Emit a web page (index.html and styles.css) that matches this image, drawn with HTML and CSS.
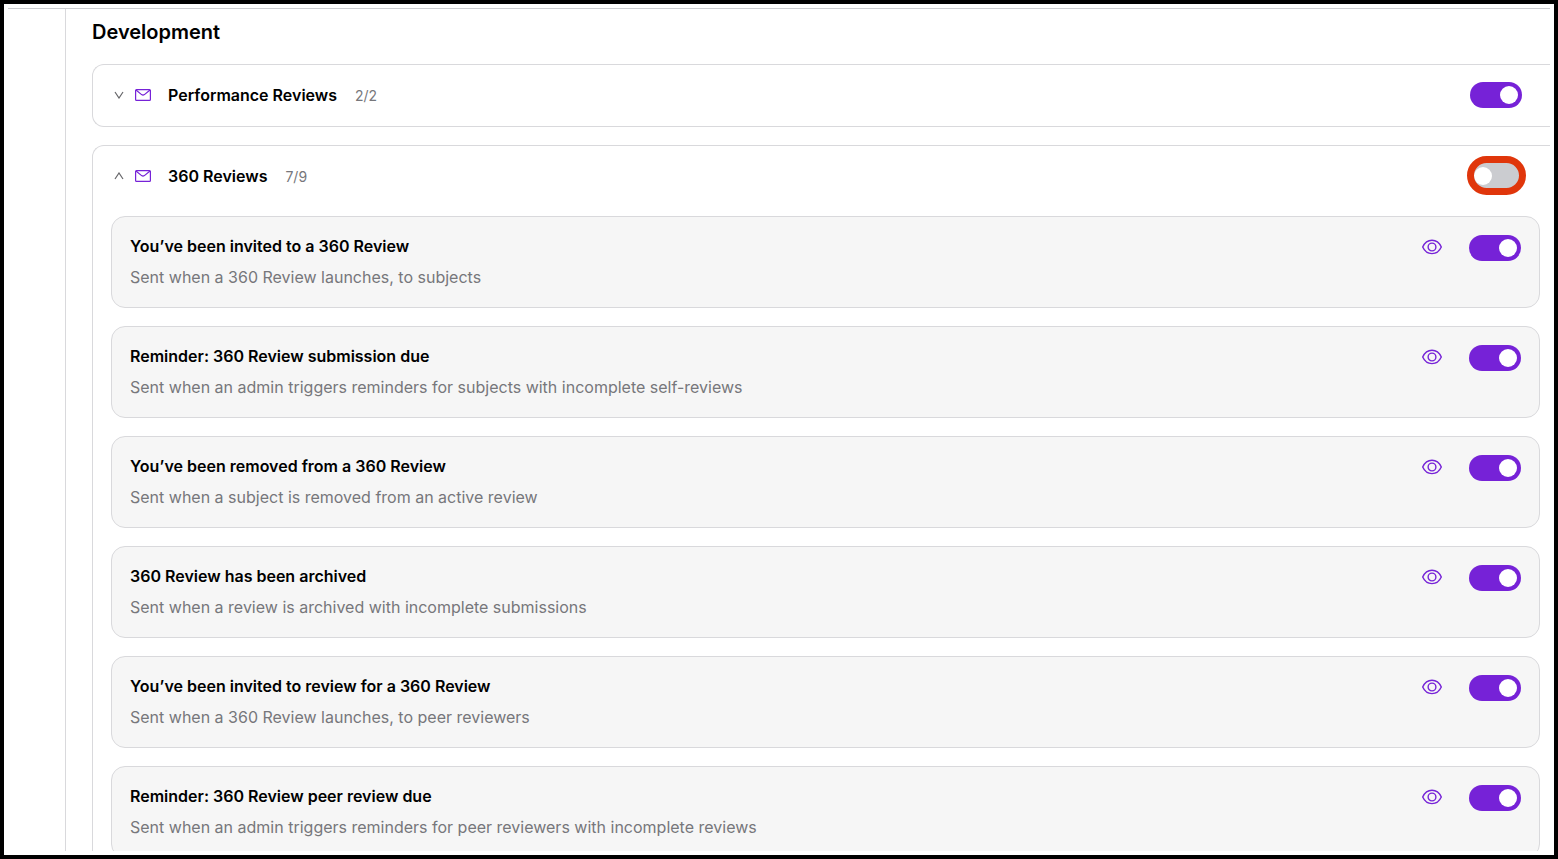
FILE: index.html
```html
<!DOCTYPE html>
<html lang="en">
<head>
	<meta charset="UTF-8">
	<meta name="viewport" content="width=device-width, initial-scale=1">

	<title>Notification settings</title>

	<link rel="stylesheet" href="styles.css">
</head>
<body>

	<!-- shared icons -->
	<svg class="sprite" aria-hidden="true">
		<symbol id="chevron-down" viewBox="0 0 10 8"><path d="M1 1l4 6 4-6"/></symbol>
		<symbol id="chevron-up" viewBox="0 0 10 8"><path d="M1 7l4-6 4 6"/></symbol>
		<symbol id="mail" viewBox="0 0 16 12"><rect x=".6" y=".6" width="14.8" height="10.8" rx=".9"/><path d="M1 1l5.600 4.600q1.400 1 2.800 0L15 1"/></symbol>
		<symbol id="eye" viewBox="0 0 20 16"><path d="M.7 8C2.600 3.800 6 1.200 10 1.200S17.400 3.800 19.300 8C17.400 12.200 14 14.600 10 14.600S2.600 12.200.7 8z"/><circle cx="10" cy="8" r="3.900"/></symbol>
	</svg>

	<div class="frame">
		<div class="page">
			<aside class="sidebar"></aside>

			<main class="content">
				<h1 class="heading">Development</h1>

				<section class="group">
					<div class="group-header">
						<button class="expander" type="button" aria-label="Expand Performance Reviews" aria-expanded="false">
							<svg class="icon chevron"><use href="#chevron-down"/></svg>
						</button>
						<svg class="icon mail"><use href="#mail"/></svg>
						<h2 class="group-title">Performance Reviews</h2>
						<span class="count">2/2</span>
						<input class="toggle" type="checkbox" aria-label="Performance Reviews" checked>
					</div>
				</section>

				<section class="group">
					<div class="group-header">
						<button class="expander" type="button" aria-label="Collapse 360 Reviews" aria-expanded="true">
							<svg class="icon chevron"><use href="#chevron-up"/></svg>
						</button>
						<svg class="icon mail"><use href="#mail"/></svg>
						<h2 class="group-title">360 Reviews</h2>
						<span class="count">7/9</span>
						<span class="highlight">
							<input class="toggle" type="checkbox" aria-label="360 Reviews">
						</span>
					</div>

					<ul class="items">
						<li class="item">
							<div class="item-text">
								<label class="item-title" for="invited">You’ve been invited to a 360 Review</label>
								<p class="item-desc">Sent when a 360 Review launches, to subjects</p>
							</div>
							<button class="preview" type="button" aria-label="Preview"><svg class="icon eye"><use href="#eye"/></svg></button>
							<input class="toggle" type="checkbox" id="invited" checked>
						</li>
						<li class="item">
							<div class="item-text">
								<label class="item-title" for="submission-due">Reminder: 360 Review submission due</label>
								<p class="item-desc">Sent when an admin triggers reminders for subjects with incomplete self-reviews</p>
							</div>
							<button class="preview" type="button" aria-label="Preview"><svg class="icon eye"><use href="#eye"/></svg></button>
							<input class="toggle" type="checkbox" id="submission-due" checked>
						</li>
						<li class="item">
							<div class="item-text">
								<label class="item-title" for="removed">You’ve been removed from a 360 Review</label>
								<p class="item-desc">Sent when a subject is removed from an active review</p>
							</div>
							<button class="preview" type="button" aria-label="Preview"><svg class="icon eye"><use href="#eye"/></svg></button>
							<input class="toggle" type="checkbox" id="removed" checked>
						</li>
						<li class="item">
							<div class="item-text">
								<label class="item-title" for="archived">360 Review has been archived</label>
								<p class="item-desc">Sent when a review is archived with incomplete submissions</p>
							</div>
							<button class="preview" type="button" aria-label="Preview"><svg class="icon eye"><use href="#eye"/></svg></button>
							<input class="toggle" type="checkbox" id="archived" checked>
						</li>
						<li class="item">
							<div class="item-text">
								<label class="item-title" for="peer-invited">You’ve been invited to review for a 360 Review</label>
								<p class="item-desc">Sent when a 360 Review launches, to peer reviewers</p>
							</div>
							<button class="preview" type="button" aria-label="Preview"><svg class="icon eye"><use href="#eye"/></svg></button>
							<input class="toggle" type="checkbox" id="peer-invited" checked>
						</li>
						<li class="item">
							<div class="item-text">
								<label class="item-title" for="peer-due">Reminder: 360 Review peer review due</label>
								<p class="item-desc">Sent when an admin triggers reminders for peer reviewers with incomplete reviews</p>
							</div>
							<button class="preview" type="button" aria-label="Preview"><svg class="icon eye"><use href="#eye"/></svg></button>
							<input class="toggle" type="checkbox" id="peer-due" checked>
						</li>
					</ul>
				</section>
			</main>
		</div>
	</div>
</body>
</html>
```
FILE: styles.css
```css
:root {
	--col-accent: #7622d7;
	--col-border: #d9d9dc;
	--col-muted: #77777b;
	--col-item: #f6f6f6;
	--col-off: #cbccd0;
	--col-highlight: #e0360b;
}
* {
	box-sizing: border-box;
}
body {
	margin: 0;
	font-family: Inter, "Liberation Sans", sans-serif;
	font-size: 16px;
	color: #000;
	background: #fff;
}
h1, h2, p, ul {
	margin: 0;
	padding: 0;
}
button {
	display: flex;
	padding: 0;
	border: none;
	background: none;
	cursor: pointer;
}

.sprite {
	display: none;
}
.icon {
	display: block;
	flex: none;
	fill: none;
	stroke: var(--col-accent);
	stroke-width: 1.2;
}
.chevron {
	width: 10px;
	height: 8px;
	stroke: #66666a;
}
.mail {
	width: 16px;
	height: 12px;
	margin: 0 17px 0 11px;
}
.eye {
	width: 20px;
	height: 16px;
	stroke-width: 1.4;
}

.frame {
	height: 100vh;
	padding: 4px;
	border: 4px solid #000;
}
.page {
	display: flex;
	height: 100%;
	overflow: hidden;
	border-top: 1px solid #cbccd0;
}
.sidebar {
	flex: 0 0 58px;
	border-right: 1px solid var(--col-border);
}
.content {
	flex: 1;
	min-width: 0;
	padding: 9px 0 0 26px;
}
.heading {
	margin-bottom: 18px;
	font-size: 20px;
	font-weight: 600;
	line-height: 28px;
}

.group {
	margin-bottom: 18px;
	border: 1px solid var(--col-border);
	border-right: none;
	border-radius: 12px 0 0 12px;
}
.group-header {
	display: flex;
	align-items: center;
	height: 61px;
	padding: 0 28px 1px 21px;
}
.group-title {
	font-size: 16px;
	font-weight: 600;
	line-height: 22px;
}
.count {
	margin: 0 auto 0 18px;
	font-size: 14px;
	color: var(--col-muted);
}

.items {
	display: grid;
	gap: 18px;
	padding: 9px 10px 18px 18px;
	list-style: none;
}
.item {
	display: flex;
	align-items: flex-start;
	padding: 18px;
	border: 1px solid var(--col-border);
	border-radius: 14px;
	background: var(--col-item);
}
.item-text {
	flex: 1;
}
.item-title {
	display: block;
	margin-bottom: 8px;
	font-weight: 600;
	line-height: 22px;
}
.item-desc {
	line-height: 24px;
	color: var(--col-muted);
}
.preview {
	margin: 4px 27px 0 0;
}

.toggle {
	appearance: none;
	display: flex;
	align-items: center;
	flex: none;
	width: 52px;
	height: 26px;
	margin: 0;
	padding: 0 4px;
	border-radius: 13px;
	background: var(--col-off);
	cursor: pointer;
}
.toggle::before {
	content: "";
	width: 18px;
	height: 18px;
	border-radius: 50%;
	background: #fff;
}
.toggle:checked {
	justify-content: flex-end;
	background: var(--col-accent);
}

/* ring drawn over the edge of the switch */
.highlight {
	position: relative;
}
.highlight::after {
	content: "";
	position: absolute;
	inset: -7px -4px -6px -3px;
	border: 7px solid var(--col-highlight);
	border-radius: 20px;
	pointer-events: none;
}
```
